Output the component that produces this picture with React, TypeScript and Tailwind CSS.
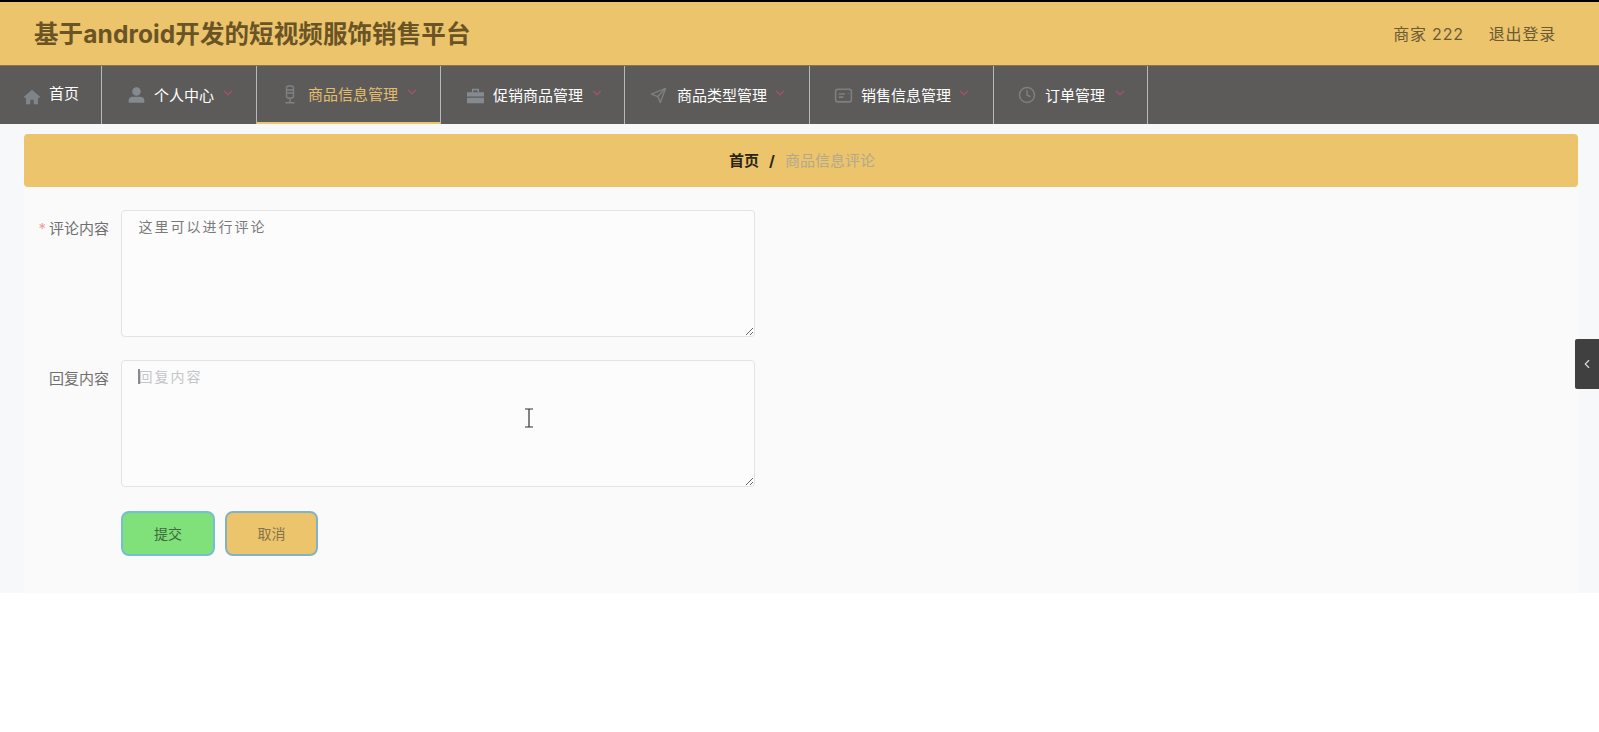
import { FC, ReactNode } from "react";
import { ChevronDown, ChevronLeft, Clock } from "lucide-react";

const font = "font-['Inter','Noto_Sans_CJK_SC',sans-serif]";

const HomeIcon = () => (
  <svg width="16" height="16" viewBox="0 0 24 24" fill="#7f848a" className="mt-[3px]">
    <path d="M12 1 0 11.5 1.5 14 3 13v10h6.500v-7h5v7H21V13l1.500 1L24 11.500z" />
  </svg>
);

const UserIcon = () => (
  <svg width="17" height="18" viewBox="0 0 24 24" fill="#858a90">
    <circle cx="12" cy="7" r="6" />
    <path d="M1 23v-3.500C1 16 4 14.500 7 14.500h10c3 0 6 1.500 6 5V23z" />
  </svg>
);

const MicIcon = () => (
  <svg width="12" height="19" viewBox="0 0 12 19" fill="none" stroke="#7f8285" strokeWidth="1.400">
    <rect x="2.500" y="1" width="7" height="12" rx="2" />
    <path d="M3 5h6M3 8h6M6 13.500V17M1.500 17.700h9" />
  </svg>
);

const CaseIcon = () => (
  <svg width="17" height="17" viewBox="0 0 24 24" fill="#858a90">
    <path d="M7 7V2.500h10V7h-2.200V4.500H9.200V7z" />
    <path d="M0 7.500h24v6H0zM0 15h24v8H0z" />
  </svg>
);

const SendIcon = () => (
  <svg width="17" height="17" viewBox="0 0 24 24" fill="none" stroke="#7d7f81" strokeWidth="2" strokeLinejoin="round">
    <path d="M22 2 2 10l9 3.500L14.500 22z" />
    <path d="M22 2 11 13.500" />
  </svg>
);

const CardIcon = () => (
  <svg width="19" height="17" viewBox="0 0 24 20" fill="none" stroke="#7d7f81" strokeWidth="2">
    <rect x="2" y="2" width="20" height="16" rx="3" />
    <path d="M6 8h8M6 12h6M18 7v1" />
  </svg>
);

type NavItem = {
  label: string;
  icon: ReactNode;
  width: string;
  gap: string;
  pad: string;
  arrow?: string;
  active?: boolean;
  raised?: boolean;
};

const navItems: NavItem[] = [
  { label: "首页", icon: <HomeIcon />, width: "w-[102px]", gap: "gap-[9px]", pad: "pl-[24px]", raised: true },
  { label: "个人中心", icon: <UserIcon />, width: "w-[155px]", gap: "gap-[9px]", pad: "pl-[26px]", arrow: "-ml-[2px]" },
  { label: "商品信息管理", icon: <MicIcon />, width: "w-[184px]", gap: "gap-[12px]", pad: "pl-[27px]", arrow: "-ml-[5px]", active: true },
  { label: "促销商品管理", icon: <CaseIcon />, width: "w-[184px]", gap: "gap-[9px]", pad: "pl-[26px]", arrow: "-ml-[2px]" },
  { label: "商品类型管理", icon: <SendIcon />, width: "w-[185px]", gap: "gap-[10px]", pad: "pl-[25px]", arrow: "-ml-[4px]" },
  { label: "销售信息管理", icon: <CardIcon />, width: "w-[184px]", gap: "gap-[8px]", pad: "pl-[24px]", arrow: "-ml-[2px]" },
  { label: "订单管理", icon: <Clock size={18} color="#7d7f81" />, width: "w-[154px]", gap: "gap-[9px]", pad: "pl-[24px]", arrow: "-ml-[1px]" }
];

const App: FC = () => {
  return (
    <div className={`relative min-h-[732px] bg-white ${font}`}>
      <header className="flex h-[66px] items-center justify-between border-t-2 border-t-black bg-[#ebc46b] pl-[34px] pr-[43px] shadow-[inset_0_-1px_0_#8a7547]">
        <h1 className="text-[24.500px] font-bold leading-none tracking-[0.100px] text-[#6a5426]">基于android开发的短视频服饰销售平台</h1>
        <div className="flex gap-[25px] text-[16px] tracking-[0.800px] text-[#6b5a36]">
          <span>商家 222</span>
          <span>退出登录</span>
        </div>
      </header>

      <nav className="flex h-[58px] bg-[#5c5b5a]">
        {navItems.map(({ label, icon, width, gap, pad, active, arrow, raised }) => (
          <div
            key={label}
            className={`flex items-center border-r-[1.500px] border-r-[#b8b8b8] ${width} ${gap} ${pad} ${
              active ? "border-b-2 border-b-[#ebc46b] text-[#e3bd6c]" : "text-white"
            }`}
          >
            {icon}
            <span className={`text-[15px] leading-none ${raised ? "-mt-[3px]" : ""}`}>{label}</span>
            {arrow && <ChevronDown size={14} color="#a4506f" strokeWidth={2.500} className={`-mt-[4px] ${arrow}`} />}
          </div>
        ))}
      </nav>

      <main className="bg-[#f7f8fa] pl-[24px] pr-[21px] pt-[10px]">
        <div className="flex h-[53px] items-center justify-center gap-[10px] rounded-[4px] bg-[#ebc46b] pl-[2px] pt-[1px] text-[15px]">
          <span className="font-bold text-[#2b2416]">首页</span>
          <span className="font-bold text-[#2b2416]">/</span>
          <span className="text-[#b3a98d]">商品信息评论</span>
        </div>

        <form className="flex h-[406px] flex-col bg-[#fafafa] pt-[23px]">
          <div className="flex">
            <label className="w-[97px] pr-[12px] pt-[9px] text-right text-[15px] leading-[20px] text-[#6f6f6f]">
              <span className="mr-[3px] text-[#f2a29b]">*</span>评论内容
            </label>
            <textarea
              defaultValue="这里可以进行评论"
              className="h-[127px] w-[634px] rounded-[4px] border-[1.500px] border-[#e2e3e6] bg-[#fcfcfc] px-[16.500px] py-[4.500px] text-[14px] leading-[22px] tracking-[2px] text-[#7a7a7a] outline-none"
            />
          </div>
          <div className="mt-[23px] flex">
            <label className="w-[97px] pr-[12px] pt-[9px] text-right text-[15px] leading-[20px] text-[#6f6f6f]">
              回复内容
            </label>
            <div className="relative">
              <textarea
                placeholder="回复内容"
                className="block h-[127px] w-[634px] rounded-[4px] border-[1.500px] border-[#e2e3e6] bg-[#fcfcfc] px-[16.500px] py-[4.500px] text-[14px] leading-[22px] tracking-[2px] outline-none placeholder:text-[#c4c5c8]"
              />
              <span className="absolute left-[17px] top-[9px] h-[15px] w-[2px] bg-[#8a8a8a]" />
              <svg
                className="absolute left-[403px] top-[48px]"
                width="10"
                height="20"
                viewBox="0 0 10 20"
                fill="none"
                stroke="#333"
                strokeWidth="1.200"
              >
                <path d="M1 1h8M1 19h8M5 1v18" />
              </svg>
            </div>
          </div>
          <div className="mt-[24px] flex gap-[10px] pl-[97px]">
            <button
              type="button"
              className="h-[45px] w-[94px] rounded-[8px] border-2 border-[#74bfd6] bg-[#80e07a] text-[14px] text-[#3d6b3a]"
            >
              提交
            </button>
            <button
              type="button"
              className="h-[45px] w-[93px] rounded-[8px] border-2 border-[#84b2c4] bg-[#ebc46b] text-[14px] text-[#86744c]"
            >
              取消
            </button>
          </div>
        </form>
      </main>

      <div className="absolute right-0 top-[339px] flex h-[50px] w-[24px] items-center justify-center rounded-l-[2px] bg-[#3f403f]">
        <ChevronLeft size={14} color="#d8d8d8" />
      </div>
    </div>
  );
};

export default App;
